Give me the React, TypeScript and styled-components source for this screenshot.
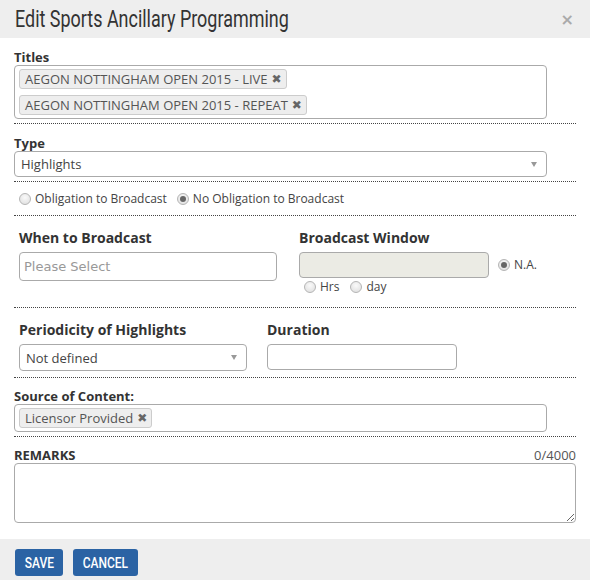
import React from "react";
import styled, { createGlobalStyle } from "styled-components";

const Global = createGlobalStyle`
  html, body { margin: 0; padding: 0; background: #fff; }
  body { font-family: "Open Sans", "Noto Sans", sans-serif; color: #333; }
  * { box-sizing: border-box; }
`;

const Modal = styled.div`
  width: 590px;
  height: 580px;
  display: flex;
  flex-direction: column;
  background: #fff;
`;

const Header = styled.div`
  height: 38px;
  background: #eeeeee;
  display: flex;
  align-items: center;
  justify-content: space-between;
  padding: 0 16px 0 15px;
`;

const Title = styled.h1`
  margin: 0;
  font-family: "Roboto", "DejaVu Sans", sans-serif;
  font-weight: 400;
  font-size: 23px;
  color: #333;
  white-space: nowrap;
  transform: scaleX(0.78);
  transform-origin: left center;
`;

const Close = styled.span`
  font-family: "DejaVu Sans", sans-serif;
  font-size: 16px;
  color: #aaa;
  font-weight: bold;
`;

const Body = styled.div`
  flex: 1;
  padding: 0 14px;
  display: flex;
  flex-direction: column;
`;

const Section = styled.div<{ $pt?: number; $pb?: number; $px?: number; $dotted?: boolean }>`
  padding: ${(p) => p.$pt ?? 0}px ${(p) => p.$px ?? 0}px ${(p) => p.$pb ?? 0}px;
  border-bottom: ${(p) => (p.$dotted === false ? "none" : "1px dotted #444")};
`;

const Label = styled.div<{ $size?: number }>`
  font-size: ${(p) => p.$size ?? 13}px;
  font-weight: bold;
  line-height: ${(p) => (p.$size ? 18 : 16)}px;
  color: #333;
`;

const TagBox = styled.div`
  width: 533px;
  border: 1px solid #aaa;
  border-radius: 4px;
  padding: 3px 3px 3px 4px;
  display: flex;
  flex-direction: column;
  align-items: flex-start;
  gap: 6px;
`;

const Tag = styled.span`
  display: inline-flex;
  align-items: center;
  height: 20px;
  padding: 0 4px 0 5px;
  background: #eeeeee;
  border: 1px solid #ccc;
  border-radius: 3px;
  font-size: 13px;
  color: #555;
  gap: 4px;
  white-space: nowrap;
`;

const TagX = styled.span`
  font-family: "DejaVu Sans", sans-serif;
  font-size: 12px;
  font-weight: bold;
  color: #666;
`;

const Select = styled.div<{ $w: number; $h: number }>`
  width: ${(p) => p.$w}px;
  height: ${(p) => p.$h}px;
  border: 1px solid #aaa;
  border-radius: 4px;
  display: flex;
  align-items: center;
  justify-content: space-between;
  padding: 0 9px 0 6px;
  font-size: 13px;
  color: #444;
`;

const Caret = styled.span`
  width: 0;
  height: 0;
  border-left: 3.5px solid transparent;
  border-right: 3.5px solid transparent;
  border-top: 5px solid #999;
`;

const Input = styled.div<{ $w: number; $h: number; $disabled?: boolean }>`
  width: ${(p) => p.$w}px;
  height: ${(p) => p.$h}px;
  border: 1px solid #aaa;
  border-radius: 4px;
  background: ${(p) => (p.$disabled ? "#ebebe4" : "#fff")};
  display: flex;
  align-items: center;
  padding: 0 4px;
  font-size: 13px;
  color: #999;
  font-family: "DejaVu Sans", sans-serif;
`;

const RadioRow = styled.div<{ $gap?: number }>`
  display: flex;
  align-items: center;
  gap: ${(p) => p.$gap ?? 10}px;
  font-size: 12px;
  line-height: 16px;
  color: #444;
`;

const RadioItem = styled.label`
  display: inline-flex;
  align-items: center;
  gap: 4px;
  white-space: nowrap;
`;

const Dot = styled.span<{ $on?: boolean }>`
  width: 12px;
  height: 12px;
  border-radius: 50%;
  border: 1px solid #b5b5b5;
  background: radial-gradient(circle at 50% 35%, #fafafa, #dcdcdc);
  display: inline-flex;
  align-items: center;
  justify-content: center;
  &::after {
    content: "";
    display: ${(p) => (p.$on ? "block" : "none")};
    width: 6px;
    height: 6px;
    border-radius: 50%;
    background: #666;
  }
`;

const Radio = ({ on, children }: { on?: boolean; children: React.ReactNode }) => (
  <RadioItem>
    <Dot $on={on} />
    {children}
  </RadioItem>
);

const TwoCol = styled.div<{ $gap: number }>`
  display: flex;
  gap: ${(p) => p.$gap}px;
`;

const Field = styled.div`
  display: flex;
  flex-direction: column;
  gap: 5px;
`;

const WindowRow = styled.div`
  display: flex;
  align-items: center;
  gap: 9px;
`;

const SubRadios = styled(RadioRow)`
  padding-left: 5px;
  margin-top: 1px;
`;

const RemarksHead = styled.div`
  display: flex;
  justify-content: space-between;
  align-items: flex-end;
`;

const Counter = styled.span`
  font-size: 13px;
  line-height: 16px;
  color: #555;
`;

const TextArea = styled.textarea`
  display: block;
  width: 562px;
  height: 60px;
  margin: 0;
  border: 1px solid #aaa;
  border-radius: 4px;
  resize: vertical;
  font-family: inherit;
`;

const Footer = styled.div`
  height: 41px;
  background: #eeeeee;
  display: flex;
  align-items: flex-start;
  gap: 10px;
  padding: 10px 14px 0 15px;
`;

const Button = styled.button<{ $w: number }>`
  width: ${(p) => p.$w}px;
  height: 27px;
  padding: 0;
  border: none;
  border-radius: 3px;
  background: #2b63a4;
  color: #fff;
  display: flex;
  align-items: center;
  justify-content: center;
  cursor: pointer;
`;

const ButtonText = styled.span`
  display: inline-block;
  font-family: "Roboto", "DejaVu Sans", sans-serif;
  font-weight: 500;
  font-size: 15px;
  transform: scaleX(0.8);
`;

export default function App() {
  return (
    <Modal>
      <Global />
      <Header>
        <Title>Edit Sports Ancillary Programming</Title>
        <Close>×</Close>
      </Header>
      <Body>
        <Section $pt={11} $pb={4}>
          <Label>Titles</Label>
          <TagBox>
            <Tag>
              AEGON NOTTINGHAM OPEN 2015 - LIVE <TagX>✖</TagX>
            </Tag>
            <Tag>
              AEGON NOTTINGHAM OPEN 2015 - REPEAT <TagX>✖</TagX>
            </Tag>
          </TagBox>
        </Section>
        <Section $pt={11} $pb={4}>
          <Label>Type</Label>
          <Select $w={533} $h={26}>
            Highlights
            <Caret />
          </Select>
        </Section>
        <Section $pt={9} $pb={8} $px={5}>
          <RadioRow>
            <Radio>Obligation to Broadcast</Radio>
            <Radio on>No Obligation to Broadcast</Radio>
          </RadioRow>
        </Section>
        <Section $pt={13} $pb={12} $px={5}>
          <TwoCol $gap={22}>
            <Field>
              <Label $size={14}>When to Broadcast</Label>
              <Input $w={258} $h={29}>Please Select</Input>
            </Field>
            <Field>
              <Label $size={14}>Broadcast Window</Label>
              <div>
                <WindowRow>
                  <Input $w={190} $h={26} $disabled />
                  <RadioRow>
                    <Radio on>N.A.</Radio>
                  </RadioRow>
                </WindowRow>
                <SubRadios $gap={11}>
                  <Radio>Hrs</Radio>
                  <Radio>day</Radio>
                </SubRadios>
              </div>
            </Field>
          </TwoCol>
        </Section>
        <Section $pt={13} $pb={6} $px={5}>
          <TwoCol $gap={20}>
            <Field>
              <Label $size={14}>Periodicity of Highlights</Label>
              <Select $w={228} $h={27}>
                Not defined
                <Caret />
              </Select>
            </Field>
            <Field>
              <Label $size={14}>Duration</Label>
              <Input $w={190} $h={26} />
            </Field>
          </TwoCol>
        </Section>
        <Section $pt={10} $pb={4}>
          <Label>Source of Content:</Label>
          <TagBox>
            <Tag>
              Licensor Provided <TagX>✖</TagX>
            </Tag>
          </TagBox>
        </Section>
        <Section $pt={10} $pb={0} $dotted={false}>
          <RemarksHead>
            <Label>REMARKS</Label>
            <Counter>0/4000</Counter>
          </RemarksHead>
          <TextArea />
        </Section>
      </Body>
      <Footer>
        <Button $w={48}>
          <ButtonText>SAVE</ButtonText>
        </Button>
        <Button $w={65}>
          <ButtonText>CANCEL</ButtonText>
        </Button>
      </Footer>
    </Modal>
  );
}
